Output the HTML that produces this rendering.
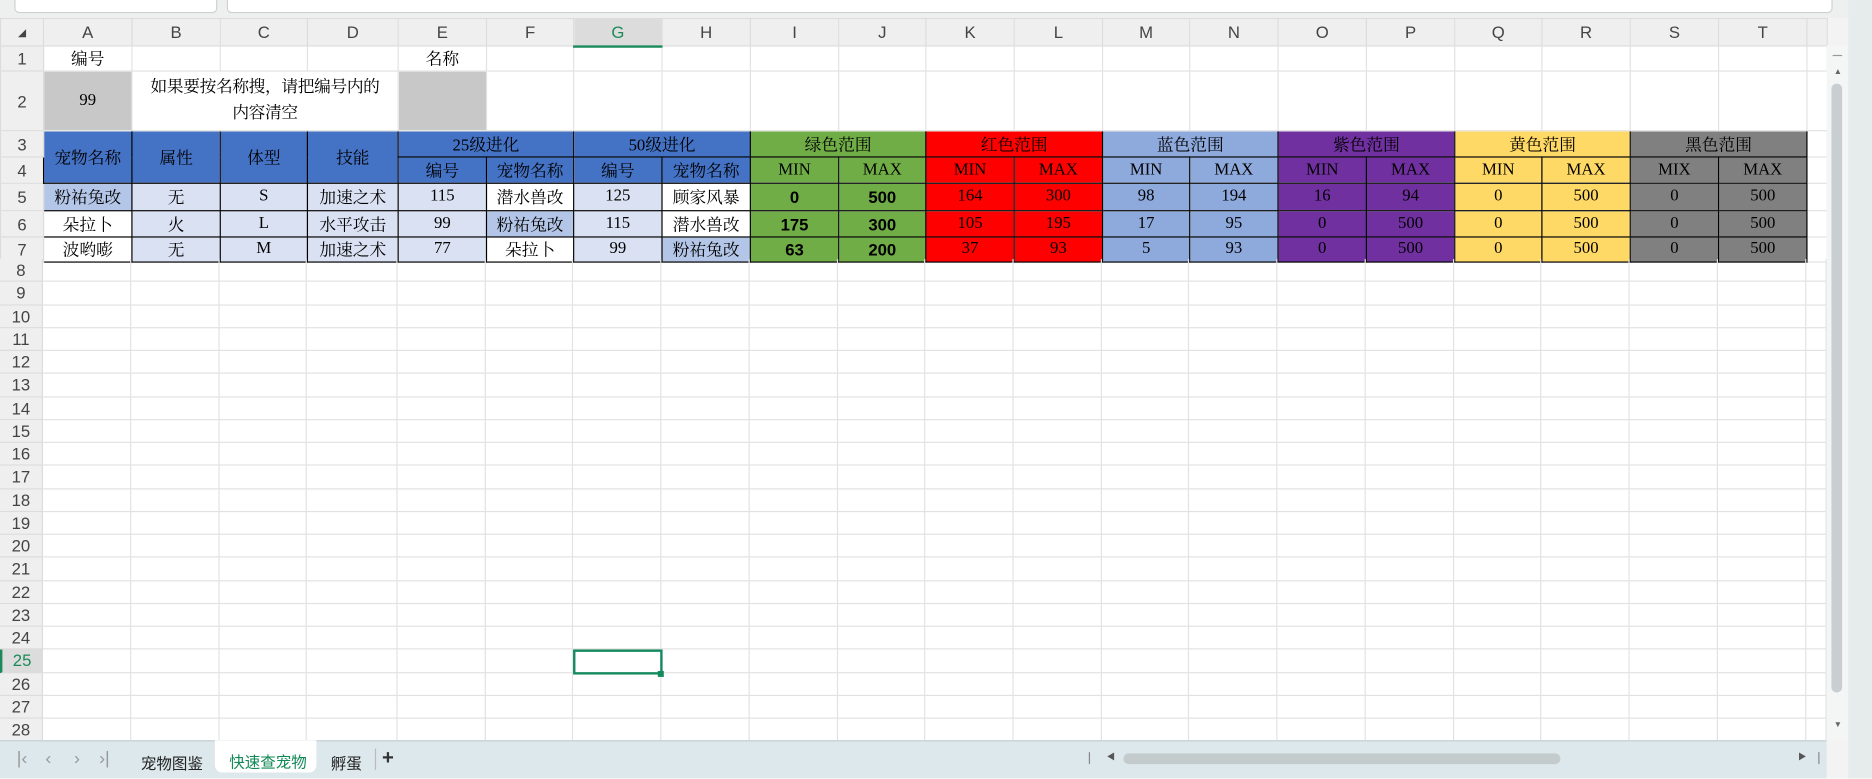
<!DOCTYPE html>
<html><head><meta charset="utf-8"><style>
*{box-sizing:border-box;margin:0;padding:0}
html,body{width:1872px;height:779px;overflow:hidden;background:#fff}
#w{position:absolute;left:0;top:0;width:1568px;height:652px;transform:scale(1.19388);transform-origin:0 0;font-family:"Liberation Serif","Noto Serif CJK SC",serif;background:#f3f3f3}
.top{position:absolute;left:0;top:0;width:1568px;height:15px;background:#eef0f0}
.box1{position:absolute;left:12px;top:-6px;width:170px;height:17px;background:#fff;border:1px solid #d0d0d0;border-radius:4px}
.box2{position:absolute;left:190px;top:-6px;width:1345px;height:17px;background:#fff;border:1px solid #d0d0d0;border-radius:4px}
table{position:absolute;left:0;top:15px;border-collapse:collapse;table-layout:fixed;background:#fff}
td{border:1px solid #e2e2e2;text-align:center;font-size:14px;padding:0;white-space:nowrap;overflow:hidden;color:#000}
td.h{background:#efefef;font-family:"Liberation Sans",sans-serif;font-size:14px;color:#444;border-color:#dcdcdc}
td.rh{background:#efefef;font-family:"Liberation Sans",sans-serif;font-size:14px;color:#444;border-color:#dcdcdc}
.b{border:1px solid #000}
.bl{background:#4472C4}.lb{background:#D9E1F2}.mb{background:#B4C6E7}.g{background:#70AD47}.r{background:#FF0000}.bb{background:#8EA9DB}.p{background:#7030A0}.y{background:#FFD966}.k{background:#808080}
.s{font-family:"Liberation Sans",sans-serif;font-weight:bold}
.gr{background:#c8c8c8}
.tabs{position:absolute;left:0;top:620px;width:1530px;height:32px;background:#dde8ec;border-top:1px solid #c8d0d4;font-family:"Liberation Sans","Noto Sans CJK SC",sans-serif;font-size:13px}
.vs{position:absolute;left:1530px;top:38px;width:18px;height:582px;background:#f4f6f6}
.rs{position:absolute;left:1548px;top:0;width:20px;height:652px;background:#e6ecec}
.nav{position:absolute;top:6px;color:#999;font-size:15px}
</style></head><body><div id="w">
<div class="top"><div class="box1"></div><div class="box2"></div></div>
<table>
<colgroup><col style="width:36px"><col style="width:74px"><col style="width:74px"><col style="width:73px"><col style="width:76px"><col style="width:74px"><col style="width:73px"><col style="width:74px"><col style="width:74px"><col style="width:74px"><col style="width:73px"><col style="width:74px"><col style="width:74px"><col style="width:73px"><col style="width:74px"><col style="width:74px"><col style="width:74px"><col style="width:73px"><col style="width:74px"><col style="width:74px"><col style="width:74px"><col style="width:17px"></colgroup>
<tr style="height:23px"><td class="h" style="font-size:9px">◢</td><td class="h">A</td><td class="h">B</td><td class="h">C</td><td class="h">D</td><td class="h">E</td><td class="h">F</td><td class="h" style="background:#dcdcdc;color:#1a8a5a;border-bottom:2px solid #1a8a5a">G</td><td class="h">H</td><td class="h">I</td><td class="h">J</td><td class="h">K</td><td class="h">L</td><td class="h">M</td><td class="h">N</td><td class="h">O</td><td class="h">P</td><td class="h">Q</td><td class="h">R</td><td class="h">S</td><td class="h">T</td><td class="h"></td></tr>
<tr style="height:20px"><td class="rh">1</td><td>编号</td><td></td><td></td><td></td><td>名称</td><td></td><td></td><td></td><td></td><td></td><td></td><td></td><td></td><td></td><td></td><td></td><td></td><td></td><td></td><td></td><td></td></tr>
<tr style="height:50px"><td class="rh">2</td><td class="gr">99</td><td colspan="3" style="line-height:22px;font-size:14px;letter-spacing:-0.3px">如果要按名称搜，请把编号内的<br>内容清空</td><td class="gr"></td><td></td><td></td><td></td><td></td><td></td><td></td><td></td><td></td><td></td><td></td><td></td><td></td><td></td><td></td><td></td></tr>
<tr style="height:22px"><td class="rh">3</td><td class="b bl" rowspan="2">宠物名称</td><td class="b bl" rowspan="2">属性</td><td class="b bl" rowspan="2">体型</td><td class="b bl" rowspan="2">技能</td><td class="b bl" colspan="2">25级进化</td><td class="b bl" colspan="2">50级进化</td><td class="b g" colspan="2">绿色范围</td><td class="b r" colspan="2">红色范围</td><td class="b bb" colspan="2">蓝色范围</td><td class="b p" colspan="2">紫色范围</td><td class="b y" colspan="2">黄色范围</td><td class="b k" colspan="2">黑色范围</td><td></td></tr>
<tr style="height:22px"><td class="rh">4</td><td class="b bl">编号</td><td class="b bl">宠物名称</td><td class="b bl">编号</td><td class="b bl">宠物名称</td><td class="b g">MIN</td><td class="b g">MAX</td><td class="b r">MIN</td><td class="b r">MAX</td><td class="b bb">MIN</td><td class="b bb">MAX</td><td class="b p">MIN</td><td class="b p">MAX</td><td class="b y">MIN</td><td class="b y">MAX</td><td class="b k">MIX</td><td class="b k">MAX</td><td></td></tr>
<tr style="height:23px"><td class="rh">5</td><td class="b mb">粉祐兔改</td><td class="b lb">无</td><td class="b lb">S</td><td class="b lb">加速之术</td><td class="b lb">115</td><td class="b">潜水兽改</td><td class="b lb">125</td><td class="b">顾家风暴</td><td class="b g s">0</td><td class="b g s">500</td><td class="b r">164</td><td class="b r">300</td><td class="b bb">98</td><td class="b bb">194</td><td class="b p">16</td><td class="b p">94</td><td class="b y">0</td><td class="b y">500</td><td class="b k">0</td><td class="b k">500</td><td></td></tr>
<tr style="height:22px"><td class="rh">6</td><td class="b">朵拉卜</td><td class="b lb">火</td><td class="b lb">L</td><td class="b lb">水平攻击</td><td class="b lb">99</td><td class="b mb">粉祐兔改</td><td class="b lb">115</td><td class="b">潜水兽改</td><td class="b g s">175</td><td class="b g s">300</td><td class="b r">105</td><td class="b r">195</td><td class="b bb">17</td><td class="b bb">95</td><td class="b p">0</td><td class="b p">500</td><td class="b y">0</td><td class="b y">500</td><td class="b k">0</td><td class="b k">500</td><td></td></tr>
<tr style="height:20px"><td class="rh">7</td><td class="b">波哟嘭</td><td class="b lb">无</td><td class="b lb">M</td><td class="b lb">加速之术</td><td class="b lb">77</td><td class="b">朵拉卜</td><td class="b lb">99</td><td class="b mb">粉祐兔改</td><td class="b g s">63</td><td class="b g s">200</td><td class="b r">37</td><td class="b r">93</td><td class="b bb">5</td><td class="b bb">93</td><td class="b p">0</td><td class="b p">500</td><td class="b y">0</td><td class="b y">500</td><td class="b k">0</td><td class="b k">500</td><td></td></tr>
</table>
<div id="rest"></div>
<div class="vs"><div style="position:absolute;left:5px;top:8px;width:8px;height:1px;background:#999"></div><div style="position:absolute;left:6px;top:18px;font-size:7px;color:#666">▲</div><div style="position:absolute;left:4px;top:32px;width:9px;height:510px;background:#c9cfd1;border-radius:5px"></div><div style="position:absolute;left:6px;top:565px;font-size:7px;color:#666">▼</div></div>
<div class="rs"></div>
<div class="tabs">
<div class="nav" style="left:14px">|‹</div>
<div class="nav" style="left:38px">‹</div>
<div class="nav" style="left:62px">›</div>
<div class="nav" style="left:83px">›|</div>
<div style="position:absolute;left:118px;top:8px;color:#222">宠物图鉴</div>
<div style="position:absolute;left:180px;top:-1px;width:85px;height:27px;background:#fff;border-radius:0 0 6px 6px"></div>
<div style="position:absolute;left:192px;top:7px;color:#118a55">快速查宠物</div>
<div style="position:absolute;left:277px;top:8px;color:#222">孵蛋</div>
<div style="position:absolute;left:314px;top:6px;width:1px;height:18px;background:#bbb"></div>
<div style="position:absolute;left:320px;top:4px;font-size:17px;font-weight:bold;color:#333">+</div>
<div style="position:absolute;left:912px;top:9px;width:1px;height:10px;background:#888"></div>
<div style="position:absolute;left:927px;top:8px;font-size:7px;color:#555">◀</div>
<div style="position:absolute;left:941px;top:10px;width:366px;height:9px;background:#c4cbcc;border-radius:5px"></div>
<div style="position:absolute;left:1506px;top:8px;font-size:7px;color:#555">▶</div>
<div style="position:absolute;left:1523px;top:9px;width:1px;height:10px;background:#888"></div>
</div>
<script>
var r=document.getElementById('rest'),cols=[36,110,184,257,333,407,480,554,628,702,775,849,923,996,1070,1144,1218,1291,1365,1439,1513,1530],h='';
var y0=217,rh=19.25;
for(var i=8;i<=28;i++){var y=y0+(i-8)*rh;var sel=i==25;
h+='<div style="position:absolute;left:0;top:'+y+'px;width:36px;height:'+rh+'px;background:'+(sel?'#dcdcdc':'#efefef')+';border-bottom:1px solid #dcdcdc;border-right:1px solid #dcdcdc;'+(sel?'border-left:2px solid #1a8a5a;color:#1a8a5a;':'color:#444;')+'font:14px Liberation Sans,sans-serif;text-align:center;line-height:'+rh+'px">'+i+'</div>';
h+='<div style="position:absolute;left:36px;top:'+(y+rh-1)+'px;width:1494px;height:1px;background:#e2e2e2"></div>';}
h+='<div style="position:absolute;left:36px;top:'+y0+'px;width:1494px;height:403px;background:#fff;z-index:-1"></div>';
for(var c=1;c<cols.length;c++){h+='<div style="position:absolute;left:'+(cols[c]-1)+'px;top:'+y0+'px;width:1px;height:403px;background:#e2e2e2"></div>';}
h+='<div style="position:absolute;left:480px;top:544px;width:75px;height:21px;border:2px solid #138a5e"></div><div style="position:absolute;left:551px;top:562px;width:5px;height:5px;background:#138a5e"></div>';
r.innerHTML=h;
</script>
</div></body></html>
